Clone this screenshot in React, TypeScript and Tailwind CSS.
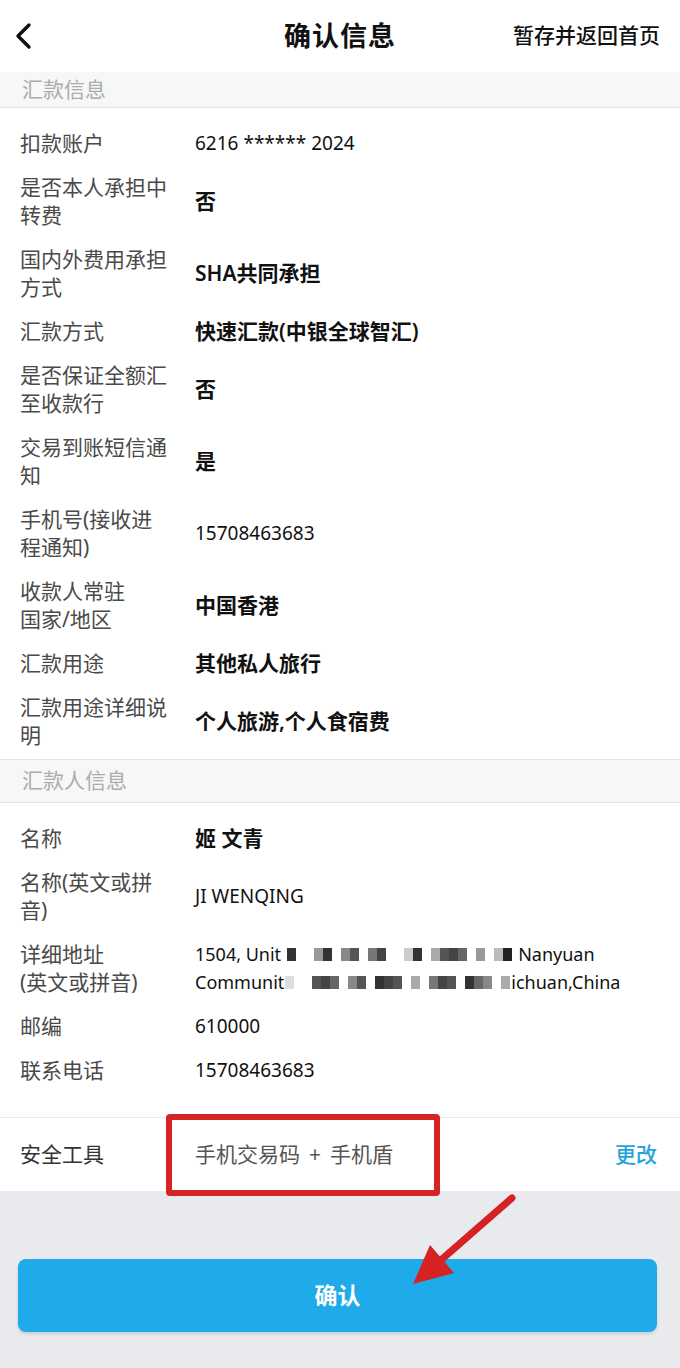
import React from 'react';

interface Row {
  label: string;
  value: string;
  bold?: boolean;
  lines?: 1 | 2;
}

const remitRows: Row[] = [
  { label: '扣款账户', value: '6216 ****** 2024' },
  { label: '是否本人承担中\n转费', value: '否', bold: true, lines: 2 },
  { label: '国内外费用承担\n方式', value: 'SHA共同承担', bold: true, lines: 2 },
  { label: '汇款方式', value: '快速汇款(中银全球智汇)', bold: true },
  { label: '是否保证全额汇\n至收款行', value: '否', bold: true, lines: 2 },
  { label: '交易到账短信通\n知', value: '是', bold: true, lines: 2 },
  { label: '手机号(接收进\n程通知)', value: '15708463683', lines: 2 },
  { label: '收款人常驻\n国家/地区', value: '中国香港', bold: true, lines: 2 },
  { label: '汇款用途', value: '其他私人旅行', bold: true },
  { label: '汇款用途详细说\n明', value: '个人旅游,个人食宿费', bold: true, lines: 2 },
];

const font = "font-['Noto_Sans','Noto_Sans_CJK_SC',sans-serif]";

function Label({ text }: { text: string }) {
  return (
    <div className="w-[175px] shrink-0 whitespace-pre-line text-[21px] leading-[28px] text-[#4a4a4a]">{text}</div>
  );
}

function InfoRow({ label, value, bold, lines = 1 }: Row) {
  return (
    <div className={`flex items-center px-[20px] ${lines === 2 ? 'h-[72px]' : 'h-[44px]'}`}>
      <Label text={label} />
      <div className={`leading-[28px] text-[#111] ${bold ? 'font-semibold text-[21px]' : 'text-[19px]'}`}>{value}</div>
    </div>
  );
}

function SectionHeader({ title, h }: { title: string; h: string }) {
  return (
    <div className={`${h} flex items-center px-[22px] bg-[#f6f7f7] border-b border-[#e2e2e2] text-[21px] text-[#acacac]`}>
      {title}
    </div>
  );
}

function Mosaic({ cells }: { cells: string[] }) {
  return (
    <span className="inline-flex items-center">
      {cells.map((c, i) => (
        <span key={i} className="w-[9px] h-[13px]" style={{ background: c }} />
      ))}
    </span>
  );
}

export default function App() {
  return (
    <div className={`relative w-[680px] h-[1368px] bg-[#e9eaee] overflow-hidden ${font}`}>
      {/* 顶部导航 */}
      <div className="h-[72px] bg-white flex items-center relative">
        <svg className="absolute left-[12px] top-[22px]" width="22" height="28" viewBox="0 0 22 28">
          <path d="M17 3 L6 14 L17 25" fill="none" stroke="#111" strokeWidth="3.4" strokeLinecap="round" strokeLinejoin="round" />
        </svg>
        <div className="absolute left-0 right-0 text-center text-[27px] font-bold text-[#111] tracking-[1px]">确认信息</div>
        <div className="absolute right-[20px] text-[21px] text-[#111] font-medium">暂存并返回首页</div>
      </div>

      <div className="bg-white">
        <SectionHeader title="汇款信息" h="h-[36px]" />
        <div className="pt-[13px] pb-[2px]">
          {remitRows.map((r) => (
            <InfoRow key={r.label} {...r} />
          ))}
        </div>

        <div className="border-t border-[#e2e2e2]">
          <SectionHeader title="汇款人信息" h="h-[43px]" />
        </div>
        <div className="pt-[13px] pb-[25px]">
          <InfoRow label="名称" value="姬 文青" bold />
          <InfoRow label={'名称(英文或拼\n音)'} value="JI WENQING" lines={2} />
          <div className="flex items-center px-[20px] h-[72px]">
            <Label text={'详细地址\n(英文或拼音)'} />
            <div className="text-[18px] leading-[28px] text-[#111]">
              <div className="flex items-center">
                1504, Unit
                <span className="ml-[6px] mr-[6px]">
                  <Mosaic cells={['#333', '#fff', '#fff', '#999', '#333', '#fff', '#888', '#555', '#fff', '#777', '#444', '#fff', '#fff', '#ccc', '#333', '#fff', '#aaa', '#555', '#444', '#666', '#fff', '#999', '#fff', '#bbb', '#222']} />
                </span>
                Nanyuan
              </div>
              <div className="flex items-center">
                Communit
                <span className="mx-[1px]">
                  <Mosaic cells={['#ddd', '#fff', '#fff', '#555', '#444', '#666', '#fff', '#888', '#555', '#fff', '#333', '#444', '#555', '#fff', '#aaa', '#fff', '#777', '#444', '#555', '#fff', '#333', '#666', '#888', '#fff', '#aaa']} />
                </span>
                ichuan,China
              </div>
            </div>
          </div>
          <InfoRow label="邮编" value="610000" />
          <InfoRow label="联系电话" value="15708463683" />
        </div>

        {/* 安全工具 */}
        <div className="relative h-[74px] border-t border-[#ececec] flex items-center pl-[20px] pr-[23px]">
          <div className="w-[175px] shrink-0 text-[21px] text-[#333]">安全工具</div>
          <div className="flex items-center gap-[9px] text-[21px] text-[#555]">
            <span>手机交易码</span>
            <span>+</span>
            <span>手机盾</span>
          </div>
          <div className="ml-auto text-[21px] text-[#26a3d9] font-medium">更改</div>
          <div className="absolute left-[166px] top-[-4px] w-[274px] h-[82px] border-[6px] border-[#d52424] rounded-[4px]" />
        </div>
      </div>

      {/* 确认按钮 */}
      <div className="pl-[18px] pr-[23px] pt-[68px]">
        <button className="w-full h-[73px] rounded-[8px] bg-[#1faae9] text-white text-[23px] font-bold shadow-[0_2px_3px_rgba(0,0,0,0.12)]">
          确认
        </button>
      </div>

      {/* 标注箭头 */}
      <svg className="absolute left-[400px] top-[1190px] pointer-events-none" width="120" height="100" viewBox="0 0 120 100">
        <line x1="112" y1="8" x2="41" y2="70" stroke="#d52222" strokeWidth="7" strokeLinecap="round" />
        <polygon points="13,94 54,83 30,55" fill="#d52222" />
      </svg>
    </div>
  );
}
